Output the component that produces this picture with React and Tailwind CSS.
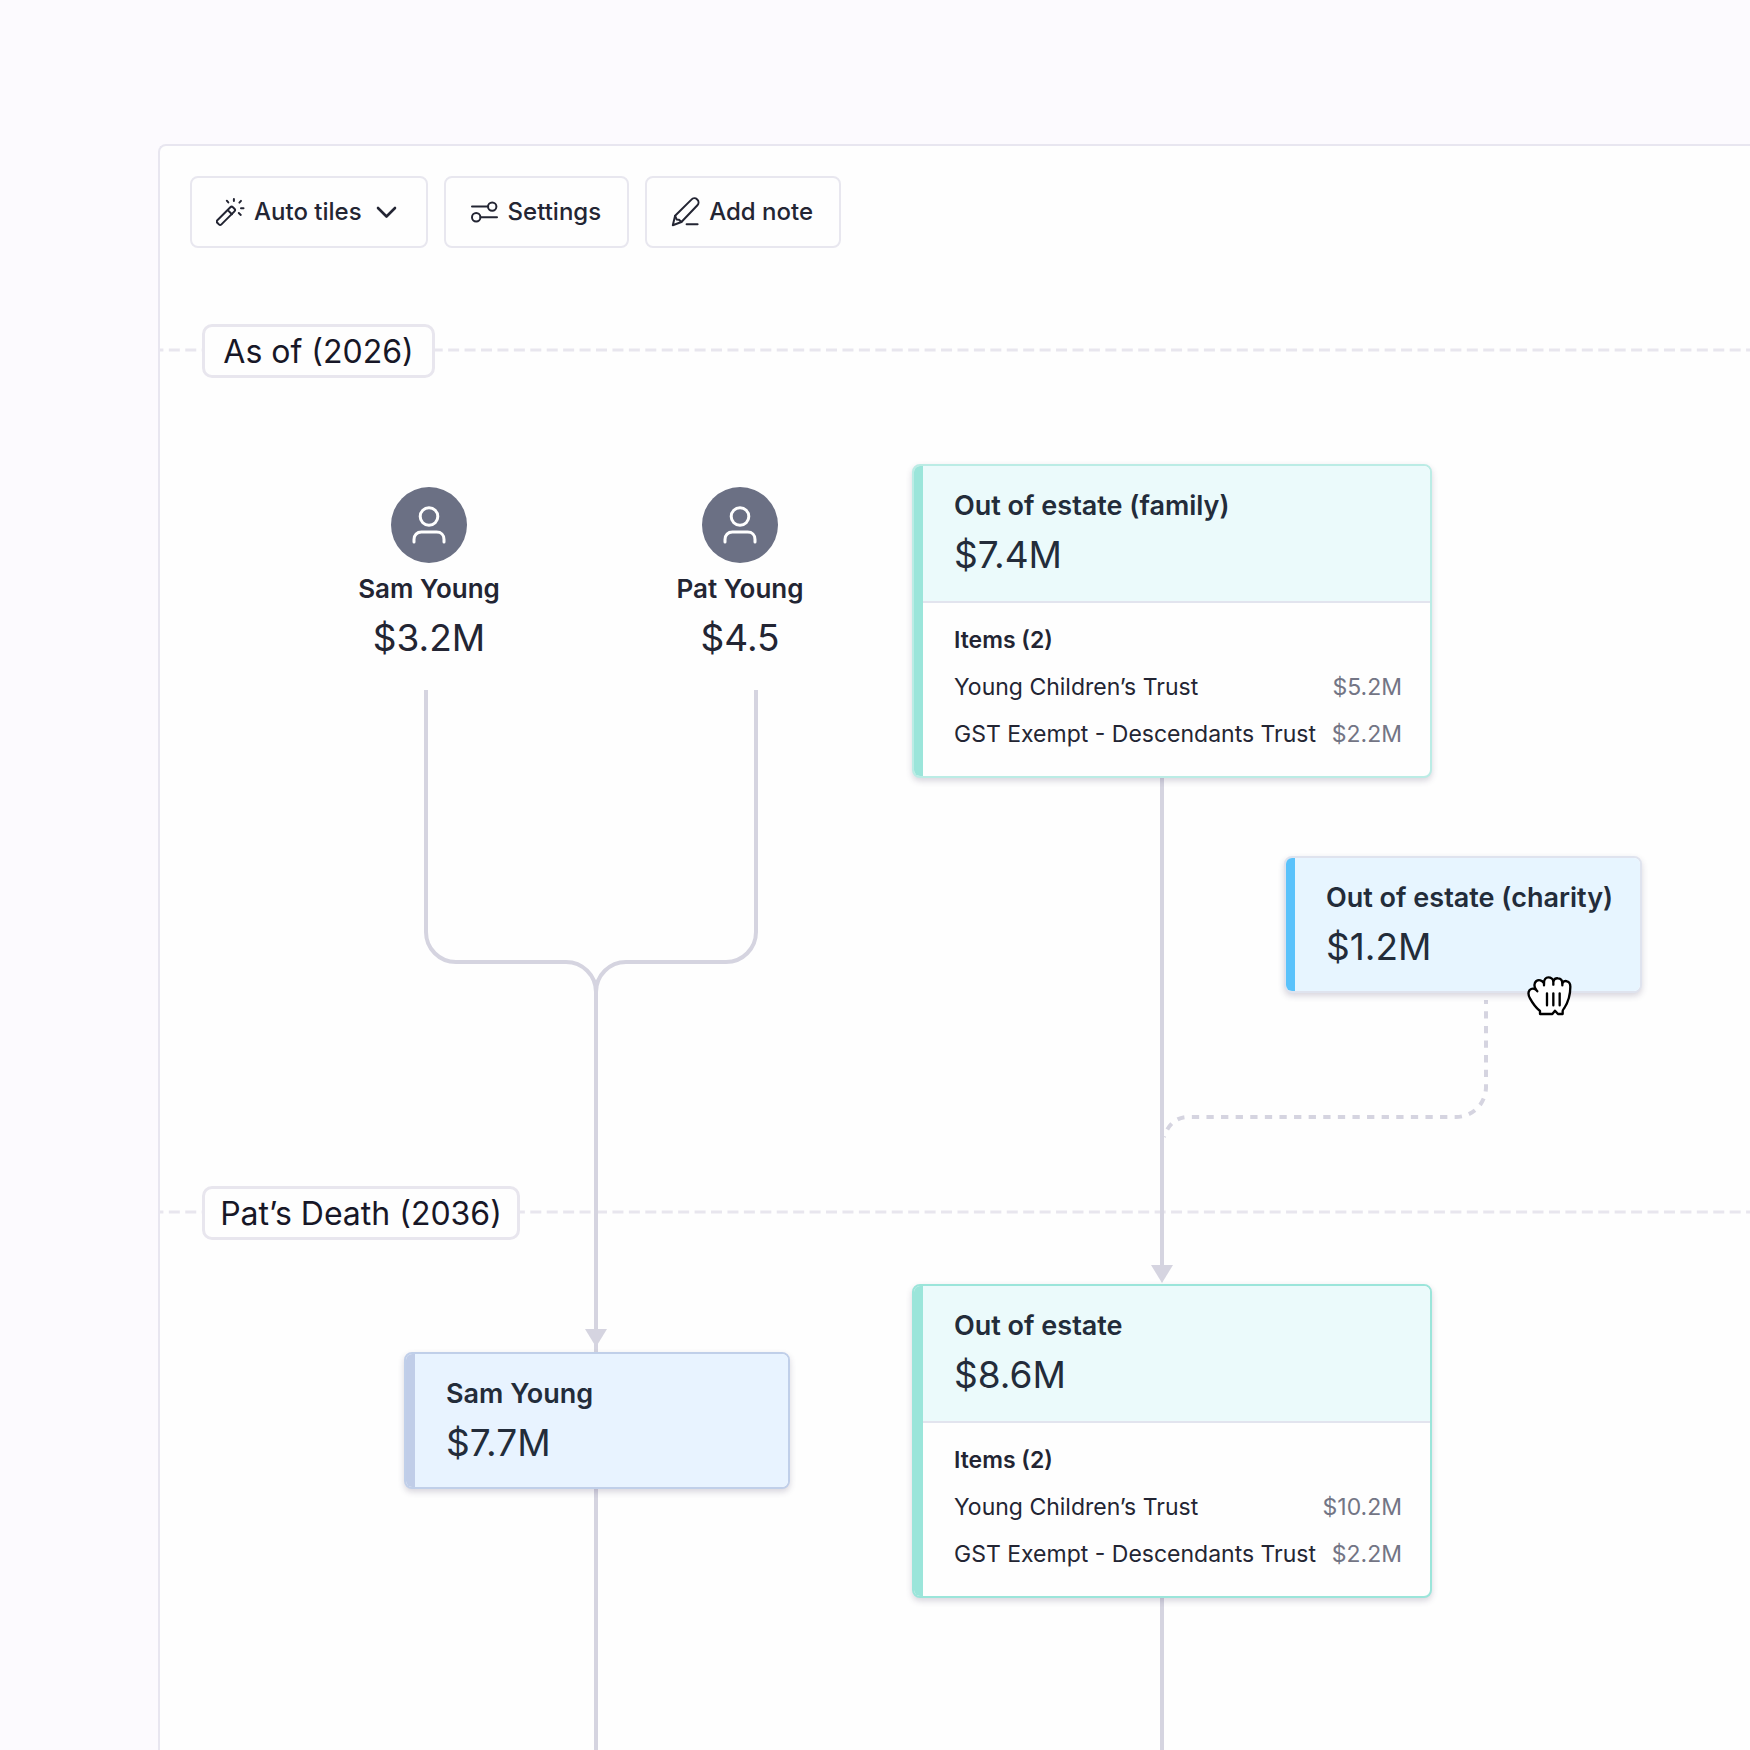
import React from 'react';
import clsx from 'clsx';

const familyItems = [
    { name: 'Young Children’s Trust', value: '$5.2M' },
    { name: 'GST Exempt - Descendants Trust', value: '$2.2M' },
];

const estateItems = [
    { name: 'Young Children’s Trust', value: '$10.2M' },
    { name: 'GST Exempt - Descendants Trust', value: '$2.2M' },
];

const tones = {
    mint: { border: 'border-[#bbece5]', bar: 'bg-[#9be5da]', fill: 'bg-[#ebfafb]' },
    teal: { border: 'border-[#9be5da]', bar: 'bg-[#9be5da]', fill: 'bg-[#ebfafb]' },
    sky: { border: 'border-[#dfe3ee]', bar: 'bg-[#5ac2fb]', fill: 'bg-[#e7f5ff]' },
    indigo: { border: 'border-[#c0cfe9]', bar: 'bg-[#c0cde8]', fill: 'bg-[#e8f3ff]' },
};

function WandIcon() {
    return (
        <svg className="size-[30px]" viewBox="0 0 30 30" fill="none" stroke="currentColor" strokeWidth="2" strokeLinecap="round" aria-hidden="true">
            <rect x="-2.9" y="-11" width="5.8" height="22" rx="1.8" transform="translate(9.9 18.8) rotate(45)" />
            <path d="M12 13.4l3.9 3.9M17.9 1.9v2.2M10.8 3.7l1.5 1.7M25 3.9l-1.6 1.7M25 11.3h2.5M22.8 16l2 1.9" />
        </svg>
    );
}

function SlidersIcon() {
    return (
        <svg className="size-[30px]" viewBox="0 0 30 30" fill="none" stroke="currentColor" strokeWidth="2" strokeLinecap="round" aria-hidden="true">
            <path d="M2 9.6h16.2M10.6 20.3H27" />
            <circle cx="22.2" cy="9.6" r="4.2" />
            <circle cx="6.2" cy="20.3" r="4.2" />
        </svg>
    );
}

function PenIcon() {
    return (
        <svg className="size-[30px]" viewBox="0 0 30 30" fill="none" stroke="currentColor" strokeWidth="2" strokeLinecap="round" strokeLinejoin="round" aria-hidden="true">
            <path d="M1.8 28.2l2.3-9.4L20.4 2.6a3.9 3.9 0 0 1 6 5.6L10.4 25z" />
            <path d="M4.1 18.8l1.5 3.6 2.4.4 2.4 2.2M15.6 27.2h11" />
        </svg>
    );
}

function ChevronIcon() {
    return (
        <svg className="size-[30px]" viewBox="0 0 30 30" fill="none" stroke="currentColor" strokeWidth="2.6" strokeLinecap="round" strokeLinejoin="round" aria-hidden="true">
            <path d="M8 11l8.5 8.5L25 11" />
        </svg>
    );
}

function HandCursor() {
    return (
        <svg className="absolute left-[1366px] top-[726px] h-[44px] w-[48px] text-black" viewBox="108 42 144 132" fill="white" stroke="currentColor" strokeWidth="7" strokeLinecap="round" strokeLinejoin="round" aria-hidden="true">
            <path d="M150 162v-9c-11-9-23-25-30-38-5-9-6-19-1-25 4-4 12-5 18-2-5-10-4-20 2-25 7-5 17-2 23 6 0-9 5-17 13-17s13 4 15 11c3-6 8-9 14-8 8 1 13 7 13 14 4-5 9-7 14-5 8 2 10 8 10 16 0 25-6 45-18 64-3 4-5 6-5 9v9h-14l-9-10-8 10z" />
            <path d="M137 88l5 6M162 69v7M190 63v11M217 69v7" fill="none" />
            <path d="M171 100v36M190 100v36M209 100v36" fill="none" />
        </svg>
    );
}

function ToolButton({ icon, label, menu }) {
    return (
        <button type="button" className="flex h-[72px] items-center gap-2 rounded-lg border-2 border-[#e8e7ef] pr-[26px] pl-6 text-2xl font-medium text-[#232533]">
            {icon}
            {label}
            {menu && <ChevronIcon />}
        </button>
    );
}

function EventLabel({ children, className }) {
    return (
        <h2 className={clsx('absolute left-[42px] flex h-[54px] items-center justify-center rounded-[10px] border-3 border-[#e8e6ee] bg-[#fefefe] pt-[2px] text-[32px] text-[#171727]', className)}>
            {children}
        </h2>
    );
}

function Person({ name, value, className }) {
    return (
        <div className={clsx('absolute flex w-[200px] flex-col items-center text-[#232533]', className)}>
            <div className="flex size-[76px] items-center justify-center rounded-full bg-[#6b7084] text-white">
                <svg className="size-[38px]" viewBox="0 0 38 38" fill="none" stroke="currentColor" strokeWidth="3" strokeLinecap="round" aria-hidden="true">
                    <circle cx="19" cy="10.5" r="8.8" />
                    <path d="M4 36v-2.500c0-4.600 3-7.400 7.400-7.400h15.200c4.400 0 7.400 2.800 7.400 7.400V36" />
                </svg>
            </div>
            <h3 className="mt-2 text-[26px] leading-9 font-semibold">{name}</h3>
            <p className="mt-1 text-[37px] leading-[54px]">{value}</p>
        </div>
    );
}

function Card({ title, value, items, tone, className }) {
    const t = tones[tone];

    return (
        <article className={clsx('absolute flex overflow-hidden rounded-lg border-2 bg-[#fefefe] text-[#232c3a] shadow-[0_3px_6px_rgba(60,50,90,0.2)]', t.border, className)}>
            <div className={clsx('w-[9px] shrink-0', t.bar)} />
            <div className="flex-1">
                <div className={clsx('px-[31px] pt-5', items ? 'pb-[19px]' : 'pb-[17px]', t.fill)}>
                    <h3 className="text-[27px] leading-10 font-semibold whitespace-nowrap">{title}</h3>
                    <p className="mt-[2px] text-[37px] leading-[54px]">{value}</p>
                </div>
                {items && (
                    <div className="border-t-2 border-[#e2e4ee] pt-[14px] pr-7 pb-[18px] pl-[31px] text-[23px] leading-[47px] text-[#232533]">
                        <h4 className="font-semibold">Items ({items.length})</h4>
                        <ul>
                            {items.map((item) => (
                                <li key={item.name} className="flex justify-between whitespace-nowrap">
                                    <span>{item.name}</span>
                                    <span className="text-[#737585]">{item.value}</span>
                                </li>
                            ))}
                        </ul>
                    </div>
                )}
            </div>
        </article>
    );
}

function Connectors() {
    return (
        <svg className="absolute inset-0 size-full" fill="none" stroke="#d5d4e0" strokeWidth="4" aria-hidden="true">
            {/* event dividers */}
            <path d="M0 102H6000M0 964H6000" stroke="#e8e6ee" strokeWidth="3" strokeDasharray="11 5.43" strokeDashoffset="7.6" />
            {/* Sam and Pat merge into one line */}
            <path d="M266 442V684a30 30 0 0 0 30 30H406a30 30 0 0 1 30 30" />
            <path d="M596 442V684a30 30 0 0 1-30 30H466a30 30 0 0 0-30 30V6000" />
            <path d="M425 1081h22l-11 18z" fill="#d5d4e0" stroke="none" />
            {/* out of estate */}
            <path d="M1002 530V1020M1002 1350V6000" />
            <path d="M991 1017h22l-11 18z" fill="#d5d4e0" stroke="none" />
            <path d="M1326 752V839a30 30 0 0 1-30 30H1028c-12 0-20 8-24 20" strokeDasharray="7.3 7.3" strokeDashoffset="3.3" />
        </svg>
    );
}

export default function App() {
    return (
        <div className="flex min-h-screen bg-[#fcfafe] pt-36 pl-[158px] font-['Inter',sans-serif]">
            <main className="flex min-w-0 flex-1 flex-col overflow-hidden rounded-tl-lg border-t-2 border-l-2 border-[#e8e6f0] bg-[#fefefe]">
                <div className="flex gap-4 px-[30px] pt-[30px]">
                    <ToolButton icon={<WandIcon />} label="Auto tiles" menu />
                    <ToolButton icon={<SlidersIcon />} label="Settings" />
                    <ToolButton icon={<PenIcon />} label="Add note" />
                </div>

                <div className="relative min-h-[1400px] flex-1 overflow-hidden">
                    <Connectors />
                    <EventLabel className="top-[76px] w-[233px]">As of (2026)</EventLabel>
                    <EventLabel className="top-[938px] w-[318px]">Pat’s Death (2036)</EventLabel>

                    <Person name="Sam Young" value="$3.2M" className="top-[239px] left-[169px]" />
                    <Person name="Pat Young" value="$4.5" className="top-[239px] left-[480px]" />

                    <Card title="Out of estate (family)" value="$7.4M" items={familyItems} tone="mint" className="top-[216px] left-[752px] w-[520px]" />
                    <Card title="Out of estate (charity)" value="$1.2M" tone="sky" className="top-[608px] left-[1124px] w-[358px]" />
                    <Card title="Sam Young" value="$7.7M" tone="indigo" className="top-[1104px] left-[244px] w-[386px]" />
                    <Card title="Out of estate" value="$8.6M" items={estateItems} tone="teal" className="top-[1036px] left-[752px] w-[520px]" />

                    <HandCursor />
                </div>
            </main>
        </div>
    );
}
